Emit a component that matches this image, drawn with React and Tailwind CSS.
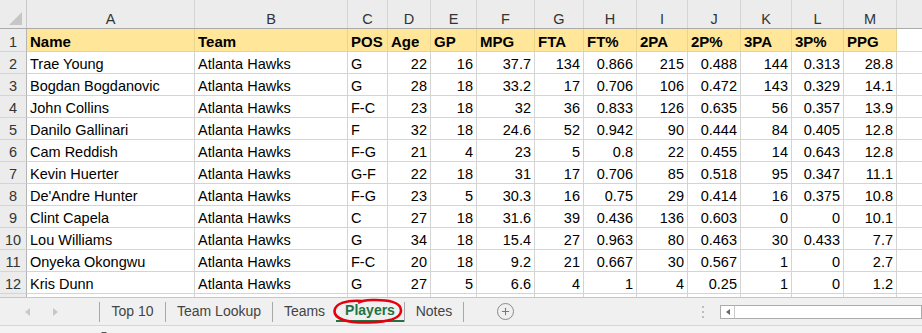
import { Plus } from "lucide-react";

const cols = [
  { key: "A", w: 168, align: "left" },
  { key: "B", w: 153, align: "left" },
  { key: "C", w: 40, align: "left" },
  { key: "D", w: 43, align: "right" },
  { key: "E", w: 46, align: "right" },
  { key: "F", w: 58, align: "right" },
  { key: "G", w: 49, align: "right" },
  { key: "H", w: 53, align: "right" },
  { key: "I", w: 51, align: "right" },
  { key: "J", w: 53, align: "right" },
  { key: "K", w: 51, align: "right" },
  { key: "L", w: 52, align: "right" },
  { key: "M", w: 53, align: "right" },
];

const header = ["Name", "Team", "POS", "Age", "GP", "MPG", "FTA", "FT%", "2PA", "2P%", "3PA", "3P%", "PPG"];

const players = [
  ["Trae Young", "Atlanta Hawks", "G", 22, 16, 37.7, 134, 0.866, 215, 0.488, 144, 0.313, 28.8],
  ["Bogdan Bogdanovic", "Atlanta Hawks", "G", 28, 18, 33.2, 17, 0.706, 106, 0.472, 143, 0.329, 14.1],
  ["John Collins", "Atlanta Hawks", "F-C", 23, 18, 32, 36, 0.833, 126, 0.635, 56, 0.357, 13.9],
  ["Danilo Gallinari", "Atlanta Hawks", "F", 32, 18, 24.6, 52, 0.942, 90, 0.444, 84, 0.405, 12.8],
  ["Cam Reddish", "Atlanta Hawks", "F-G", 21, 4, 23, 5, 0.8, 22, 0.455, 14, 0.643, 12.8],
  ["Kevin Huerter", "Atlanta Hawks", "G-F", 22, 18, 31, 17, 0.706, 85, 0.518, 95, 0.347, 11.1],
  ["De'Andre Hunter", "Atlanta Hawks", "F-G", 23, 5, 30.3, 16, 0.75, 29, 0.414, 16, 0.375, 10.8],
  ["Clint Capela", "Atlanta Hawks", "C", 27, 18, 31.6, 39, 0.436, 136, 0.603, 0, 0, 10.1],
  ["Lou Williams", "Atlanta Hawks", "G", 34, 18, 15.4, 27, 0.963, 80, 0.463, 30, 0.433, 7.7],
  ["Onyeka Okongwu", "Atlanta Hawks", "F-C", 20, 18, 9.2, 21, 0.667, 30, 0.567, 1, 0, 2.7],
  ["Kris Dunn", "Atlanta Hawks", "G", 27, 5, 6.6, 4, 1, 4, 0.25, 1, 0, 1.2],
];

// sheet tabs with their widths in px
const tabs = [
  { name: "Top 10", w: 66 },
  { name: "Team Lookup", w: 107 },
  { name: "Teams", w: 64 },
  { name: "Players", w: 68 },
  { name: "Notes", w: 59 },
];

const RowHeader = ({ children, h }) => (
  <div
    className="shrink-0 w-[27px] bg-[#ececec] border-r border-b border-r-[#b5b5b5] border-b-[#d4d4d4] flex items-end justify-center pb-[1px] leading-[16px] text-[#333]"
    style={{ height: h }}
  >
    {children}
  </div>
);

const App = () => {
  return (
    <div
      className="w-[922px] h-[333px] overflow-hidden bg-white flex flex-col text-[14.5px] text-black"
      style={{ fontFamily: '"Liberation Sans", Arial, sans-serif' }}
    >
      {/* column letters */}
      <div className="flex h-[29px] shrink-0 bg-[#ececec] border-b border-[#ababab]">
        <div className="w-[27px] shrink-0 border-r border-[#c8c8c8] relative">
          <div className="absolute right-[4px] bottom-[3px] w-0 h-0 border-l-[13px] border-l-transparent border-b-[13px] border-b-[#c6c6c6]" />
        </div>
        {cols.map((c) => (
          <div
            key={c.key}
            className="shrink-0 border-r border-[#d4d4d4] flex items-end justify-center leading-[16px] pb-[1px] text-[#333]"
            style={{ width: c.w }}
          >
            {c.key}
          </div>
        ))}
        <div className="flex-1" />
      </div>

      {/* header row */}
      <div className="flex shrink-0">
        <RowHeader h={23}>1</RowHeader>
        {header.map((t, i) => (
          <div
            key={t}
            className="shrink-0 h-[23px] bg-[#ffe699] border-r border-b border-[#e8d48a] flex items-end pb-[1px] px-[3px] leading-[17px] font-bold text-[15px]"
            style={{ width: cols[i].w }}
          >
            {t}
          </div>
        ))}
        <div className="flex-1 h-[23px] border-b border-[#d4d4d4]" />
      </div>

      {/* data rows */}
      {players.map((p, r) => (
        <div key={r} className="flex shrink-0">
          <RowHeader h={22}>{r + 2}</RowHeader>
          {p.map((v, i) => (
            <div
              key={i}
              className={`shrink-0 h-[22px] border-r border-b border-[#d4d4d4] flex items-end pb-[1px] px-[3px] leading-[16px] whitespace-nowrap ${
                cols[i].align === "right" ? "justify-end" : "justify-start"
              }`}
              style={{ width: cols[i].w }}
            >
              {v}
            </div>
          ))}
          <div className="flex-1 h-[22px] border-b border-[#d4d4d4]" />
        </div>
      ))}

      {/* sliver of row 13 */}
      <div className="flex h-[3px] shrink-0 overflow-hidden">
        <div className="w-[27px] shrink-0 bg-[#ececec] border-r border-[#b5b5b5]" />
        {cols.map((c) => (
          <div key={c.key} className="shrink-0 border-r border-[#d4d4d4]" style={{ width: c.w }} />
        ))}
      </div>

      {/* sheet tabs */}
      <div className="h-[28px] shrink-0 bg-[#f0f0f0] border-t border-[#c6c6c6] flex items-stretch relative text-[14px] text-[#444]">
        <div className="w-[99px] shrink-0 flex items-center gap-[23px] pl-[25px]">
          <svg width="5" height="8" viewBox="0 0 5 8">
            <path d="M5 0 L0 4 L5 8 Z" fill="#c8c8c8" />
          </svg>
          <svg width="5" height="8" viewBox="0 0 5 8">
            <path d="M0 0 L5 4 L0 8 Z" fill="#c8c8c8" />
          </svg>
        </div>
        {tabs.map((t) =>
          t.name === "Players" ? (
            <div
              key={t.name}
              className="shrink-0 flex items-center justify-center font-bold text-[#217346] border-b-2 border-[#217346] mb-[3px] pt-[3px]"
              style={{ width: t.w }}
            >
              {t.name}
            </div>
          ) : (
            <div key={t.name} className="shrink-0 flex items-center" style={{ width: t.w }}>
              <div className="w-px h-[20px] bg-[#a8a8a8]" />
              <div className="flex-1 text-center">{t.name}</div>
            </div>
          )
        )}
        <div className="flex items-center">
          <div className="w-px h-[20px] bg-[#a8a8a8]" />
        </div>
        <div className="flex items-center pl-[33px]">
          <div className="w-[17px] h-[17px] rounded-full border border-[#8a8a8a] flex items-center justify-center text-[#777]">
            <Plus size={11} strokeWidth={2.2} />
          </div>
        </div>
        <div className="flex flex-col justify-center gap-[3px] ml-[188px]">
          <div className="w-[2px] h-[2px] bg-[#bdbdbd]" />
          <div className="w-[2px] h-[2px] bg-[#bdbdbd]" />
          <div className="w-[2px] h-[2px] bg-[#bdbdbd]" />
        </div>
        <div className="flex items-center ml-[16px] flex-1">
          <div className="h-[14px] flex-1 bg-white border border-[#ababab] flex">
            <div className="w-[14px] border-r border-[#c6c6c6] flex items-center justify-center">
              <svg width="4" height="6" viewBox="0 0 4 6">
                <path d="M4 0 L0 3 L4 6 Z" fill="#666" />
              </svg>
            </div>
          </div>
        </div>

        {/* red annotation circle */}
        <svg
          className="absolute left-[332px] top-[0px] pointer-events-none"
          width="72"
          height="27"
          viewBox="0 0 72 27"
        >
          <path
            d="M30 3 C15 2 3 5 2.5 13 C2 21 16 25 36 24.5 C56 24 69 21 69 12.5 C69 4 56 1.5 40 2 C34 2.2 30 2.5 27 4.5"
            fill="none"
            stroke="#e3000f"
            strokeWidth="2.6"
            strokeLinecap="round"
          />
        </svg>
      </div>

      {/* status bar, only the top of it is in view */}
      <div className="flex-1 bg-[#f3f3f3] border-t border-[#d6d6d6] overflow-hidden text-[13px] leading-[16px] text-[#555]">
        <div className="flex items-start pl-[7px] pt-[5px]">
          <span>Ready</span>
          <span className="w-[13px] h-[11px] border border-[#555] mt-[2px] ml-[22px]" />
          <svg className="ml-[18px] mt-[1px]" width="12" height="12" viewBox="0 0 12 12">
            <rect x="2" y="1.5" width="8" height="10" fill="none" stroke="#555" />
            <rect x="4" y="0.5" width="4" height="2" fill="none" stroke="#555" />
          </svg>
          <span className="ml-[8px]">Accessibility: Investigate</span>
        </div>
      </div>
    </div>
  );
};

export default App;
